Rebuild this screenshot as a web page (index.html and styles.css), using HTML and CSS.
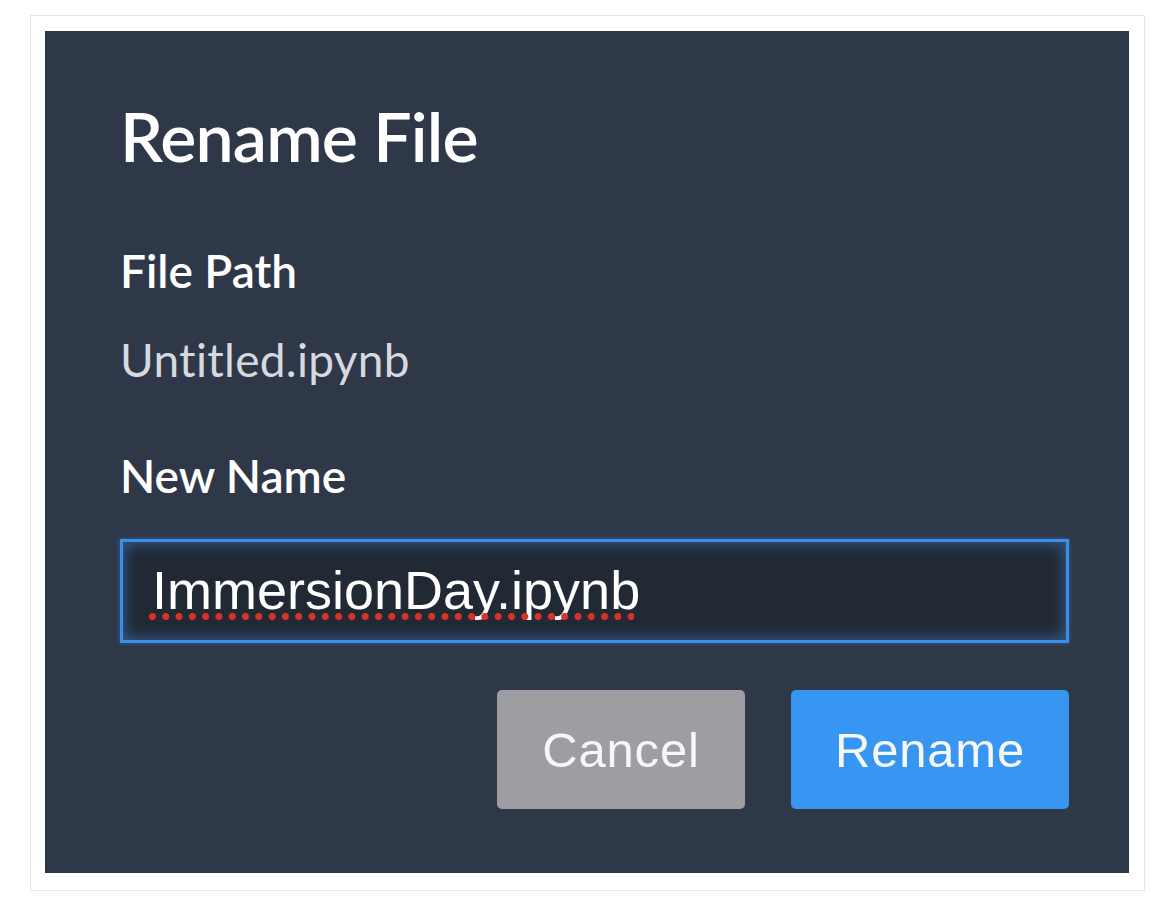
FILE: index.html
```html
<!DOCTYPE html>
<html lang="en">
<head>
<meta charset="utf-8">
<title>Rename File</title>
<link rel="stylesheet" href="styles.css">
</head>
<body>
<div class="frame">
  <div class="dialog">
    <h1 class="title">Rename File</h1>
    <div class="label">File Path</div>
    <div class="path">Untitled.ipynb</div>
    <div class="label label-name">New Name</div>
    <div class="input"><span class="misspelled">ImmersionDay.ipynb</span></div>
    <div class="actions">
      <button class="btn btn-cancel">Cancel</button>
      <button class="btn btn-primary">Rename</button>
    </div>
  </div>
</div>
</body>
</html>
```
FILE: styles.css
```css
html, body {
  margin: 0;
  padding: 0;
  background: #ffffff;
}
body {
  padding: 15px 0 0 30px;
  font-family: "Lato", "Open Sans", sans-serif;
}
.frame {
  box-sizing: border-box;
  width: 1115px;
  height: 876px;
  border: 1px solid #e7e7e7;
  padding: 15px 15px 16px 14px;
}
.dialog {
  box-sizing: border-box;
  height: 842px;
  background: #2f3849;
  padding: 71px 60px 0 75px;
  display: flex;
  flex-direction: column;
}
.title {
  margin: 0;
  font-size: 68px;
  line-height: 68px;
  font-weight: 600;
  letter-spacing: -0.8px;
  color: #ffffff;
}
.label {
  margin-top: 78px;
  font-size: 46px;
  line-height: 46px;
  font-weight: 600;
  color: #ffffff;
}
.path {
  margin-top: 43px;
  font-size: 46px;
  line-height: 46px;
  font-weight: 400;
  letter-spacing: 0.3px;
  color: #d6d9de;
}
.label-name {
  margin-top: 70px;
}
.input {
  box-sizing: border-box;
  margin-top: 40px;
  height: 104px;
  border: 3px solid #3b8fe9;
  background: #212935;
  box-shadow: inset 0 0 14px 2px rgba(70, 150, 240, 0.45), 0 0 4px rgba(59, 143, 233, 0.5);
  padding-left: 29px;
  display: flex;
  align-items: center;
  font-family: "Liberation Sans", Arial, sans-serif;
  font-size: 54px;
  color: #ffffff;
}
.misspelled {
  position: relative;
  top: -1px;
}
.misspelled::after {
  content: "";
  position: absolute;
  left: -3px;
  right: 6px;
  bottom: 1px;
  height: 7px;
  background-image: radial-gradient(circle at 3.5px 3.5px, #d8322b 3.2px, rgba(216, 50, 43, 0) 3.8px);
  background-size: 13.3px 7px;
  background-repeat: repeat-x;
}
.actions {
  margin-top: 47px;
  display: flex;
  justify-content: flex-end;
  gap: 46px;
}
.btn {
  height: 119px;
  border: none;
  border-radius: 5px;
  font-family: "Liberation Sans", Arial, sans-serif;
  font-size: 49px;
  letter-spacing: 0.8px;
  color: #f7f7f7;
  padding: 0;
}
.btn-cancel {
  width: 248px;
  background: #9e9ea2;
}
.btn-primary {
  width: 278px;
  background: #3796f1;
}
```
